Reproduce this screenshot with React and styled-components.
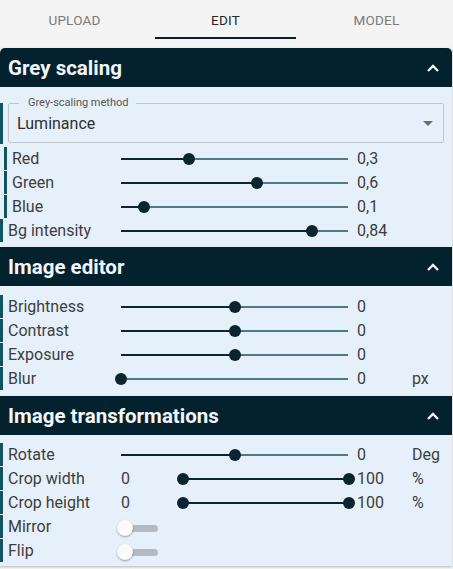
import React, { useState } from "react";
import styled, { createGlobalStyle } from "styled-components";

const GlobalStyle = createGlobalStyle`
  html, body {
    margin: 0;
    padding: 0;
    background: #f4f4f4;
    font-family: Roboto, "Liberation Sans", sans-serif;
  }
`;

const Page = styled.div`
  width: 453px;
  height: 569px;
  overflow: hidden;
  display: flex;
  flex-direction: column;
`;

const Tabs = styled.nav`
  display: flex;
  height: 40px;
  margin: 0 1px 8px -1px;
`;

const Tab = styled.div`
  flex: 1;
  display: flex;
  flex-direction: column;
  align-items: center;
  padding: 0 5px;
  font-size: 13.5px;
  letter-spacing: 0.2px;
  text-transform: uppercase;
  color: ${(p) => (p.$active ? "#262626" : "#7a7a7a")};
  cursor: pointer;
`;

const TabLabel = styled.span`
  flex: 1;
  display: flex;
  align-items: center;
  padding-top: 2px;
`;

const TabIndicator = styled.span`
  align-self: stretch;
  height: 2px;
  margin-bottom: 1px;
  background: ${(p) => (p.$active ? "#0b1f27" : "transparent")};
`;

const Panel = styled.section`
  width: 452px;
  background: #e6f0fa;
  box-shadow: 0 1px 2px rgba(0, 0, 0, 0.25);
  &:first-of-type > header {
    border-radius: 5px 5px 0 0;
  }
`;

const PanelHeader = styled.header`
  height: 39px;
  display: flex;
  align-items: center;
  justify-content: space-between;
  padding: 0 12px 0 8px;
  background: #03222e;
  color: #f2f7fb;
  font-size: 20.5px;
  font-weight: 700;
`;

const PanelBody = styled.div`
  display: flex;
  flex-direction: column;
  gap: 1px;
  padding: ${(p) => p.$pad || "9px 0 6px"};
`;

const Row = styled.div`
  display: grid;
  grid-template-columns: ${(p) => 113 - (p.$indent || 0)}px 227px 64px auto;
  align-items: center;
  height: 23px;
  margin-left: ${(p) => p.$indent || 0}px;
  padding-left: 5px;
  border-left: 3px solid #0e5561;
  font-size: 16px;
  color: #3d3d3d;
  white-space: nowrap;
`;

const Value = styled.span`
  padding-left: 9px;
`;

const Unit = styled.span``;

const SelectRow = styled.div`
  display: flex;
  height: 41px;
  margin-top: 9px;
  margin-bottom: 2px;
  padding: 0 8px 0 5px;
  border-left: 3px solid #0e5561;
`;

const Outline = styled.fieldset`
  flex: 1;
  margin: 0;
  padding: 0 8px;
  border: 1px solid #bfc6cc;
  border-radius: 2px;
  display: flex;
  align-items: center;
  justify-content: space-between;
  position: relative;
  top: -6px;
  height: 46px;
  box-sizing: border-box;
`;

const Legend = styled.legend`
  margin-left: 2px;
  padding: 0 7px 0 9px;
  font-size: 11px;
  color: #555;
  line-height: 12px;
`;

const SelectValue = styled.span`
  font-size: 16px;
  color: #2f2f2f;
  margin-top: -4px;
`;

const Caret = styled.span`
  width: 0;
  height: 0;
  margin-top: -4px;
  margin-right: 2px;
  border-left: 5px solid transparent;
  border-right: 5px solid transparent;
  border-top: 5px solid #6b6b6b;
`;

const Track = styled.div`
  position: relative;
  height: 2px;
  background: ${(p) => (p.$range ? "#0a2530" : "#4d7c82")};
`;

const Fill = styled.div`
  position: absolute;
  top: 0;
  bottom: 0;
  background: #0a2530;
`;

const Thumb = styled.span`
  position: absolute;
  top: 50%;
  width: 12px;
  height: 12px;
  margin: -6px 0 0 -6px;
  border-radius: 50%;
  background: #0a2530;
`;

const RangeCell = styled.div`
  display: flex;
  align-items: center;
`;

const MinValue = styled.span`
  width: 62px;
`;

const SwitchTrack = styled.span`
  position: relative;
  display: inline-block;
  width: 36px;
  height: 7px;
  margin-left: 1px;
  border-radius: 4px;
  background: #b3bac1;
`;

const SwitchThumb = styled.span`
  position: absolute;
  top: -5px;
  left: -5px;
  width: 16px;
  height: 16px;
  border-radius: 50%;
  background: #fafafa;
  box-shadow: 0 1px 2px rgba(0, 0, 0, 0.35);
`;

const Chevron = () => (
  <svg width="14" height="10" viewBox="0 0 14 10">
    <polyline
      points="2,8 7,3 12,8"
      fill="none"
      stroke="#eef4f8"
      strokeWidth="2.4"
    />
  </svg>
);

const Slider = ({ value, min = 0, max = 1 }) => {
  const pct = ((value - min) / (max - min)) * 100;
  return (
    <Track>
      <Fill style={{ left: 0, width: pct + "%" }} />
      <Thumb style={{ left: pct + "%" }} />
    </Track>
  );
};

const SliderRow = ({ label, value, min, max, unit, indent, display }) => (
  <Row $indent={indent}>
    <span>{label}</span>
    <Slider value={value} min={min} max={max} />
    <Value>{display ?? value}</Value>
    <Unit>{unit}</Unit>
  </Row>
);

const RangeRow = ({ label }) => (
  <Row>
    <span>{label}</span>
    <RangeCell>
      <MinValue>0</MinValue>
      <Track $range style={{ flex: 1, marginRight: -1 }}>
        <Thumb style={{ left: 0 }} />
        <Thumb style={{ left: "100%" }} />
      </Track>
    </RangeCell>
    <Value>100</Value>
    <Unit>%</Unit>
  </Row>
);

const SwitchRow = ({ label }) => (
  <Row>
    <span>{label}</span>
    <span>
      <SwitchTrack>
        <SwitchThumb />
      </SwitchTrack>
    </span>
  </Row>
);

const tabs = ["Upload", "Edit", "Model"];

export default function App() {
  const [tab, setTab] = useState("Edit");
  return (
    <Page>
      <GlobalStyle />
      <Tabs>
        {tabs.map((t) => (
          <Tab key={t} $active={t === tab} onClick={() => setTab(t)}>
            <TabLabel>{t}</TabLabel>
            <TabIndicator $active={t === tab} />
          </Tab>
        ))}
      </Tabs>

      <Panel>
        <PanelHeader>
          Grey scaling
          <Chevron />
        </PanelHeader>
        <PanelBody $pad="7px 0 5px">
          <SelectRow>
            <Outline>
              <Legend>Grey-scaling method</Legend>
              <SelectValue>Luminance</SelectValue>
              <Caret />
            </Outline>
          </SelectRow>
          <SliderRow label="Red" value={0.3} display="0,3" indent={4} />
          <SliderRow label="Green" value={0.6} display="0,6" indent={4} />
          <SliderRow label="Blue" value={0.1} display="0,1" indent={4} />
          <SliderRow label="Bg intensity" value={0.84} display="0,84" />
        </PanelBody>
      </Panel>

      <Panel>
        <PanelHeader>
          Image editor
          <Chevron />
        </PanelHeader>
        <PanelBody>
          <SliderRow label="Brightness" value={0} min={-1} max={1} />
          <SliderRow label="Contrast" value={0} min={-1} max={1} />
          <SliderRow label="Exposure" value={0} min={-1} max={1} />
          <SliderRow label="Blur" value={0} min={0} max={10} unit="px" />
        </PanelBody>
      </Panel>

      <Panel>
        <PanelHeader>
          Image transformations
          <Chevron />
        </PanelHeader>
        <PanelBody $pad="8px 0 4px">
          <SliderRow label="Rotate" value={0} min={-180} max={180} unit="Deg" />
          <RangeRow label="Crop width" />
          <RangeRow label="Crop height" />
          <SwitchRow label="Mirror" />
          <SwitchRow label="Flip" />
        </PanelBody>
      </Panel>
    </Page>
  );
}
